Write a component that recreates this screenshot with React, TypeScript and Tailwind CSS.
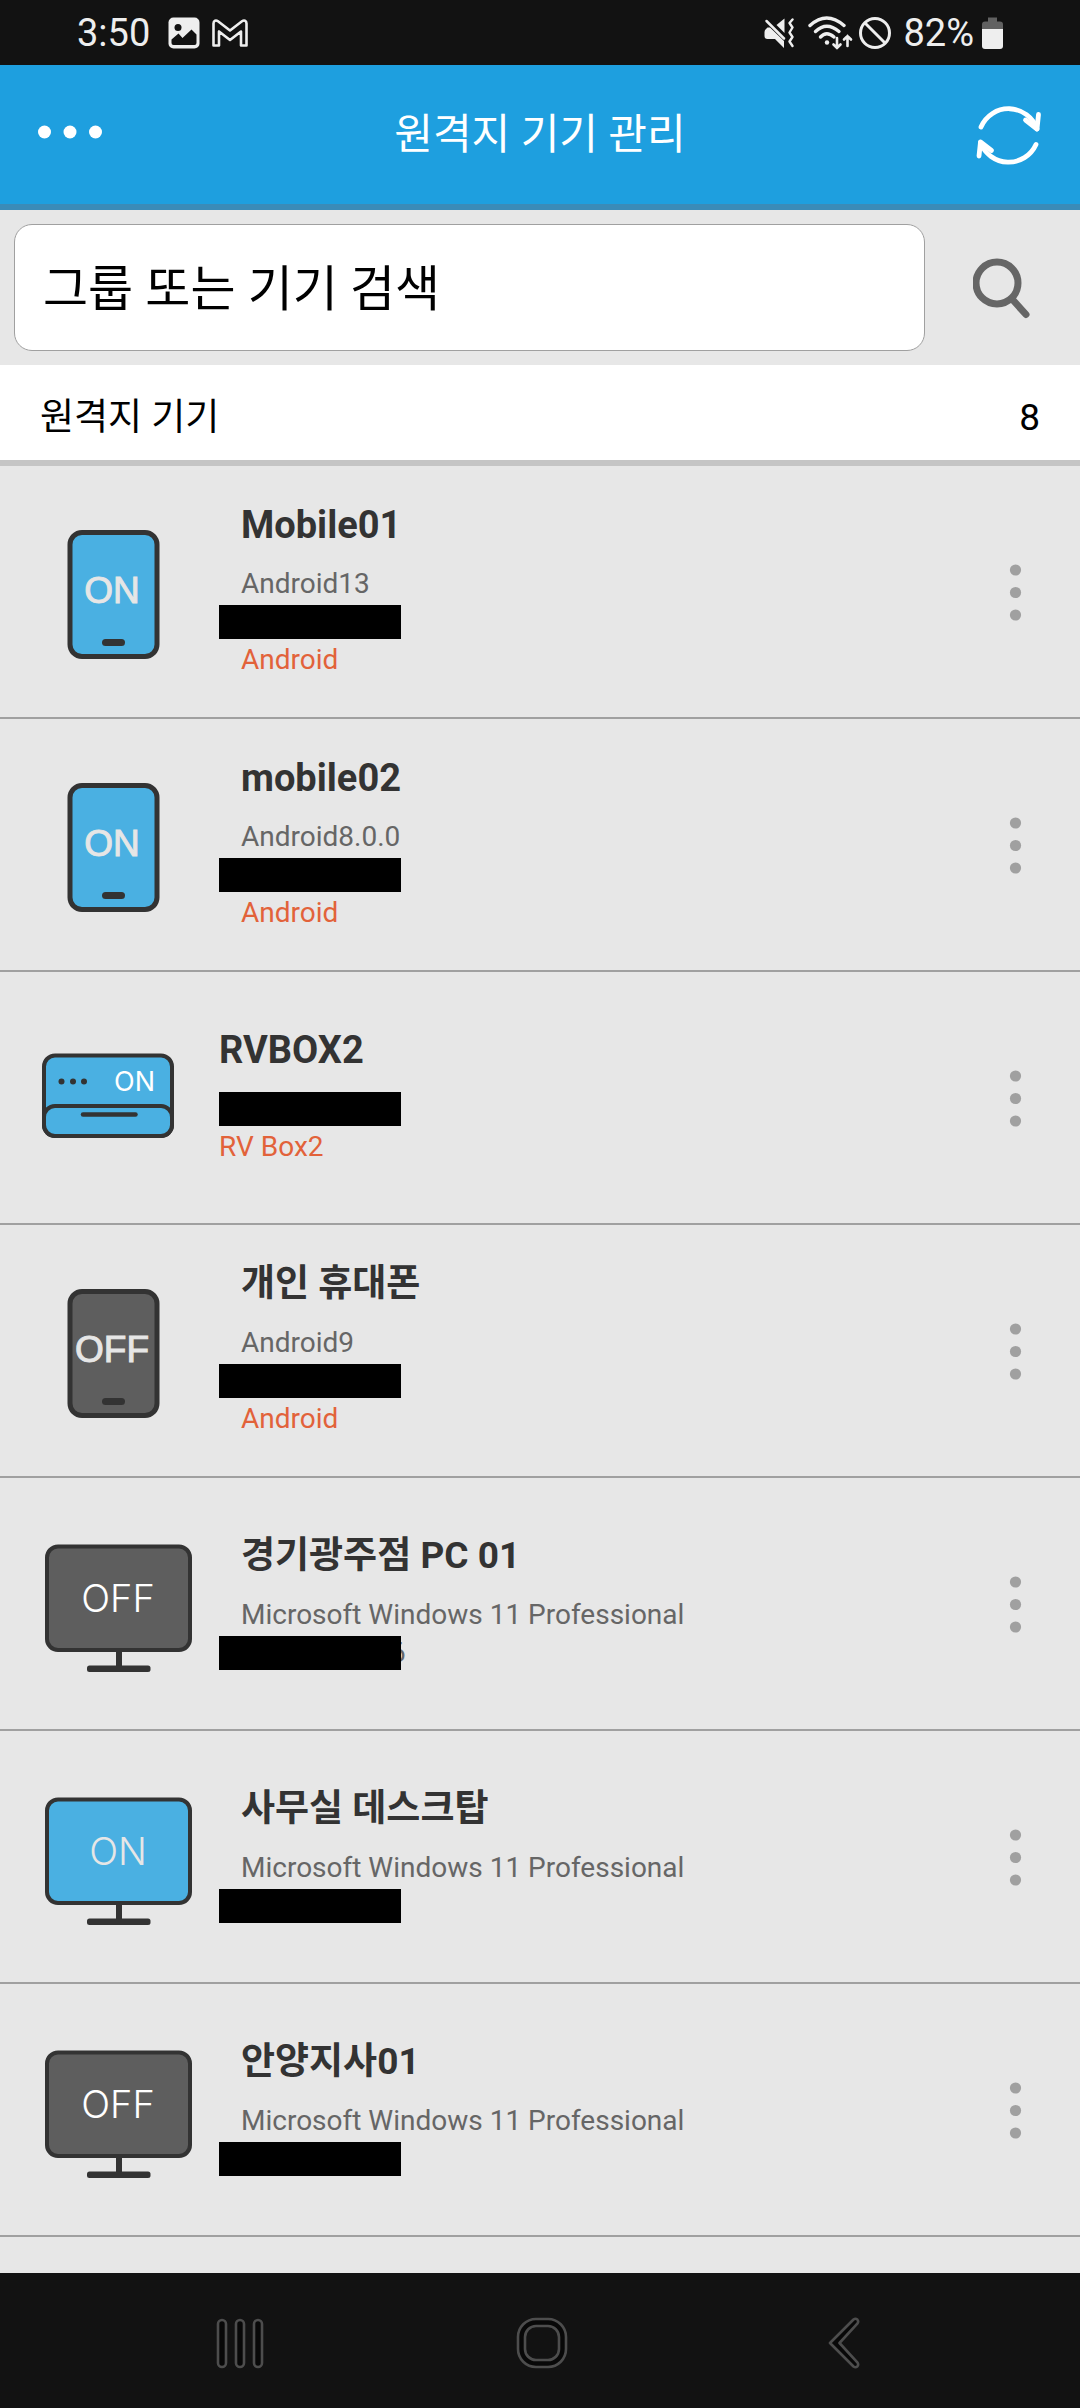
import React from "react";

type DeviceKind = "phone" | "box" | "pc";

interface Device {
  name: string;
  kind: DeviceKind;
  on: boolean;
  os?: string;
  type?: string;
  tail?: string;
}

const devices: Device[] = [
  { name: "Mobile01", kind: "phone", on: true, os: "Android13", type: "Android" },
  { name: "mobile02", kind: "phone", on: true, os: "Android8.0.0", type: "Android" },
  { name: "RVBOX2", kind: "box", on: true, type: "RV Box2" },
  { name: "개인 휴대폰", kind: "phone", on: false, os: "Android9", type: "Android" },
  { name: "경기광주점 PC 01", kind: "pc", on: false, os: "Microsoft Windows 11 Professional", tail: "6" },
  { name: "사무실 데스크탑", kind: "pc", on: true, os: "Microsoft Windows 11 Professional" },
  { name: "안양지사01", kind: "pc", on: false, os: "Microsoft Windows 11 Professional" },
];

const DeviceIcon: React.FC<{ kind: DeviceKind; on: boolean }> = ({ kind, on }) => {
  const fill = on ? "#4ab0e2" : "#5e5e5e";
  const label = on ? "ON" : "OFF";

  return (
    <svg viewBox="0 0 160 141" className="w-[160px] h-[141px] shrink-0" role="img" aria-label={`${kind} ${label}`}>
      {kind === "phone" && (
        <>
          <rect x="30" y="11.5" width="87" height="124" rx="12" fill={fill} stroke="#333" strokeWidth="5" />
          <rect x="62" y="118" width="23" height="7" rx="3.5" fill="#333" />
          <text
            x="72"
            y="82"
            textAnchor="middle"
            fontSize="37"
            fill="#e6e6e6"
            stroke="#e6e6e6"
            strokeWidth="1"
            className="font-['Liberation_Sans',Arial,sans-serif]"
          >
            {label}
          </text>
        </>
      )}
      {kind === "box" && (
        <>
          <rect x="4" y="28.5" width="128" height="80.5" rx="11" fill={fill} stroke="#333" strokeWidth="4" />
          <rect x="4" y="79" width="128" height="30" rx="11" fill={fill} stroke="#333" strokeWidth="4" />
          <circle cx="21.5" cy="54.5" r="3" fill="#333" />
          <circle cx="33" cy="54.5" r="3" fill="#333" />
          <circle cx="44" cy="54.5" r="3" fill="#333" />
          <path d="M43 87.5h52.5" stroke="#333" strokeWidth="4.5" strokeLinecap="round" />
          <text
            x="94.5"
            y="63.5"
            textAnchor="middle"
            fontSize="27"
            fill="#fff"
            className="font-['Inter',sans-serif] font-normal"
          >
            {label}
          </text>
        </>
      )}
      {kind === "pc" && (
        <>
          <path d="M79 117v18" stroke="#333" strokeWidth="6" />
          <rect x="47" y="132.5" width="63.5" height="6.5" rx="2.5" fill="#333" />
          <rect x="7" y="13.5" width="143" height="103.5" rx="11" fill={fill} stroke="#333" strokeWidth="4" />
          <text
            x="78"
            y="79"
            textAnchor="middle"
            fontSize="38"
            fill={on ? "#e6e6e6" : "#fff"}
            className="font-['Inter',sans-serif] font-light"
          >
            {label}
          </text>
        </>
      )}
    </svg>
  );
};

const StatusBar = () => (
  <div className="flex items-center h-[65px] px-[77px] bg-[#121212] text-[#eee] text-[38px] leading-[44px]">
    <span>3:50</span>
    <svg viewBox="0 0 32 32" className="w-8 h-8 ml-[18px]">
      <rect x="0.5" y="0.5" width="31" height="31" rx="5" fill="#eee" />
      <circle cx="10" cy="10.5" r="3.5" fill="#121212" />
      <path d="M3.5 22.500l7-6 4 4.500 9-8.500 5 5v8.500a2 2 0 0 1-2 2h-21a2 2 0 0 1-2-2z" fill="#121212" />
    </svg>
    <svg viewBox="0 0 36 28" className="w-9 h-7 ml-3" fill="none" stroke="#eee" strokeWidth="2.6" strokeLinejoin="round">
      <path d="M1.500 26.500V4.500C1.500 1.500 4 .8 6 2.300L18 11.500 30 2.300c2-1.500 4.500-.8 4.500 2.200v22h-5.500V12.500L18 21 7 12.500v14z" />
    </svg>
    <div className="flex items-center ml-auto">
      <svg viewBox="0 0 30 30" className="w-[30px] h-[30px]" fill="#eee">
        <path d="M1 12l2.500-2.500h2.500L20 23v7l-9-9H3.500Q.5 21 .5 18v-4z" />
        <path d="M12.500 7l8-6.500v14.500z" />
        <path d="M2.500 3l17.500 17.500" stroke="#eee" strokeWidth="2.5" strokeLinecap="round" />
        <path
          d="M28.500 1.500l-3 3.500 3 4.500-3 5 3 4.500-3 4.500 3 4.500"
          fill="none"
          stroke="#eee"
          strokeWidth="2.4"
          strokeLinecap="round"
          strokeLinejoin="round"
        />
      </svg>
      <svg viewBox="0 0 45 34" className="w-[45px] h-[34px] ml-3.5" fill="none" stroke="#eee" strokeWidth="3.4" strokeLinecap="round">
        <path d="M2 9.500Q18.500-5.500 36 9.500" />
        <path d="M7.500 15.500Q18.500 5 31 15.500" />
        <path d="M12.500 21Q18.500 14.500 26 21" />
        <circle cx="19" cy="26.5" r="2.2" fill="#eee" stroke="none" />
        <path d="M29 22v10M25.500 28.500L29 32l3.500-3.500M39.500 30V20M36 23.500L39.500 20l3.500 3.500" strokeWidth="2.6" />
      </svg>
      <svg viewBox="0 0 32 32" className="w-8 h-8 ml-1.5" fill="none" stroke="#eee" strokeWidth="3">
        <circle cx="16" cy="16" r="14.5" />
        <path d="M6 6l20 20" />
      </svg>
      <span className="ml-3">82%</span>
      <svg viewBox="0 0 21 32" className="w-[21px] h-8 ml-2">
        <path d="M6 .5h9v4h3q3 0 3 3V12H0V7.500q0-3 3-3h3z" fill="#616161" />
        <path d="M0 12h21v17q0 3-3 3H3q-3 0-3-3z" fill="#eee" />
      </svg>
    </div>
  </div>
);

const Header = () => (
  <header className="grid grid-cols-[1fr_auto_1fr] items-center h-[145px] px-9 bg-[#1e9fdf] border-b-[6px] border-[#3a8bb8]">
    <button type="button" aria-label="메뉴" className="justify-self-start pb-1.5">
      <svg viewBox="0 0 68 20" className="w-[68px] h-5" fill="#fff">
        <circle cx="8.5" cy="10" r="6.5" />
        <circle cx="34" cy="10" r="6.5" />
        <circle cx="59.5" cy="10" r="6.5" />
      </svg>
    </button>
    <h1 className="text-[42px] leading-[60px] text-white">원격지 기기 관리</h1>
    <button type="button" aria-label="새로 고침" className="justify-self-end">
      <svg
        viewBox="0 0 70 70"
        className="w-[70px] h-[70px]"
        fill="none"
        stroke="#fff"
        strokeWidth="4.8"
        strokeLinecap="round"
        strokeLinejoin="round"
      >
        <path d="M7 27A30 30 0 0 1 63 29" />
        <path d="M64.500 14.500L63 29 51.500 20" />
        <path d="M62 44.500A30 30 0 0 1 6.500 42.500" />
        <path d="M5 56L6.500 42 17.500 50.500" />
      </svg>
    </button>
  </header>
);

const SearchBar = () => (
  <form className="flex items-center h-[155px] pl-3.5 bg-[#e7e7e7]">
    <input
      type="search"
      aria-label="그룹 또는 기기 검색"
      placeholder="그룹 또는 기기 검색"
      className="flex-1 min-w-0 h-[127px] px-7 pt-1 rounded-[18px] border border-[#a0a0a0] bg-white text-[49px] text-black placeholder:text-black placeholder:opacity-100"
    />
    <button type="button" aria-label="검색" className="flex justify-center w-[155px]">
      <svg viewBox="0 0 60 62" className="w-[60px] h-[62px]" fill="none" stroke="#666" strokeWidth="7">
        <circle cx="24" cy="26" r="21" />
        <path d="M39 42l14 15.500" strokeLinecap="round" />
      </svg>
    </button>
  </form>
);

const DeviceRow: React.FC<{ device: Device }> = ({ device }) => {
  const hangul = /[가-힣]/.test(device.name);

  return (
    <li className="flex items-center h-[253px] px-10 border-b-2 border-[#a0a0a0]">
      <DeviceIcon kind={device.kind} on={device.on} />
      <div className={device.kind === "box" ? "flex-1 ml-[19px]" : "flex-1 ml-[41px]"}>
        <h2 className={`mb-5 leading-[40px] font-bold text-[#333] ${hangul ? "text-[37px]" : "text-[38px]"}`}>
          {device.name}
        </h2>
        {device.os && <p className="text-[28px] leading-[38px] text-[#666]">{device.os}</p>}
        <div className={device.kind === "box" ? "flex items-center h-[38px]" : "flex items-center h-[38px] -ml-[22px]"}>
          <span className="relative z-10 w-[182px] h-[34px] bg-black" />
          {device.tail && <span className="-ml-[11px] text-[28px] leading-[38px] text-[#666]">{device.tail}</span>}
        </div>
        {device.type && <p className="text-[28px] leading-[38px] text-[#e2623a]">{device.type}</p>}
      </div>
      <button type="button" aria-label={`${device.name} 더보기`}>
        <svg viewBox="0 0 50 60" className="w-[50px] h-[60px]" fill="#a0a0a0">
          <circle cx="25.5" cy="8" r="5.6" />
          <circle cx="25.5" cy="30.5" r="5.6" />
          <circle cx="25.5" cy="53" r="5.6" />
        </svg>
      </button>
    </li>
  );
};

const NavBar = () => (
  <nav className="grid grid-cols-3 place-items-center h-[135px] pt-1 pl-[89px] pr-[84px] bg-[#121212]">
    <button type="button" aria-label="최근 앱">
      <svg viewBox="0 0 50 52" className="w-[50px] h-[52px]" fill="#080808" stroke="#4d4d4d" strokeWidth="2.6">
        <rect x="3" y="3" width="8" height="47" rx="4" />
        <rect x="21" y="3" width="8" height="47" rx="4" />
        <rect x="39" y="3" width="8" height="47" rx="4" />
      </svg>
    </button>
    <button type="button" aria-label="홈">
      <svg viewBox="0 0 52 52" className="w-[52px] h-[52px]" fill="#080808" stroke="#4d4d4d" strokeWidth="2.6">
        <rect x="2" y="2" width="48" height="48" rx="18" />
        <rect x="9" y="9" width="34" height="34" rx="11" fill="#121212" />
      </svg>
    </button>
    <button type="button" aria-label="뒤로">
      <svg viewBox="0 0 36 52" className="w-9 h-[52px]" fill="#080808" stroke="#4d4d4d" strokeWidth="2.6" strokeLinejoin="round">
        <path d="M26.500 2.500L3 26 26.500 49.500q2 1.500 3.800 0 1.700-2 0-4.200L12.500 26 30.300 6.700q1.700-2.200 0-4.200-1.800-1.500-3.800 0z" />
      </svg>
    </button>
  </nav>
);

export default function App() {
  return (
    <div className="flex flex-col min-h-screen bg-[#e7e7e7] font-['Roboto','Noto_Sans_CJK_KR',sans-serif]">
      <StatusBar />
      <Header />
      <SearchBar />
      <main className="flex-1">
        <div className="flex items-center justify-between h-[101px] pt-2.5 px-10 bg-white border-b-[6px] border-[#c5c5c5] text-[37px] leading-[48px] text-black">
          <span>원격지 기기</span>
          <span>8</span>
        </div>
        <ul>
          {devices.map((device) => (
            <DeviceRow key={device.name} device={device} />
          ))}
        </ul>
      </main>
      <NavBar />
    </div>
  );
}
